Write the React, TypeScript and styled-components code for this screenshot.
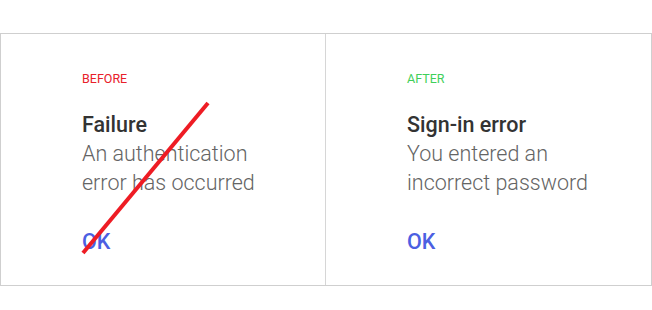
import React from "react";
import styled, { createGlobalStyle } from "styled-components";

const Global = createGlobalStyle`
  html, body { margin: 0; padding: 0; background: #ffffff; }
  body { font-family: Roboto, "Noto Sans", sans-serif; }
`;

const Page = styled.div`
  padding-top: 33px;
  width: 652px;
`;

const Frame = styled.div`
  display: grid;
  grid-template-columns: 324px 1fr;
  height: 253px;
  box-sizing: border-box;
  border: 1px solid #cfcfcf;
`;

const Panel = styled.div<{ $divider?: boolean }>`
  position: relative;
  padding: 37px 0 0 81px;
  border-left: ${(p) => (p.$divider ? "1px solid #d6d6d6" : "none")};
`;

const Label = styled.div<{ $color: string }>`
  font-size: 12.5px;
  line-height: 15px;
  color: ${(p) => p.$color};
`;

const Title = styled.div`
  margin-top: 25px;
  font-size: 21.5px;
  font-weight: 500;
  line-height: 28px;
  color: #333333;
`;

const Body = styled.div`
  font-size: 21.5px;
  font-weight: 300;
  line-height: 29px;
  color: #646464;
`;

const Action = styled.div`
  margin-top: 31px;
  font-size: 21.5px;
  font-weight: 500;
  line-height: 28px;
  color: #4c5fe2;
`;

const Strike = styled.svg`
  position: absolute;
  left: 0;
  top: 0;
  width: 324px;
  height: 252px;
  pointer-events: none;
`;

export default function App() {
  return (
    <Page>
      <Global />
      <Frame>
        <Panel>
          <Label $color="#e8202a">BEFORE</Label>
          <Title>Failure</Title>
          <Body>
            An authentication
            <br />
            error has occurred
          </Body>
          <Action>OK</Action>
          <Strike viewBox="0 0 324 252">
            <line x1="82" y1="219" x2="207" y2="69" stroke="#ee1c24" strokeWidth="4" />
          </Strike>
        </Panel>
        <Panel $divider>
          <Label $color="#3fcf5a">AFTER</Label>
          <Title>Sign-in error</Title>
          <Body>
            You entered an
            <br />
            incorrect password
          </Body>
          <Action>OK</Action>
        </Panel>
      </Frame>
    </Page>
  );
}
